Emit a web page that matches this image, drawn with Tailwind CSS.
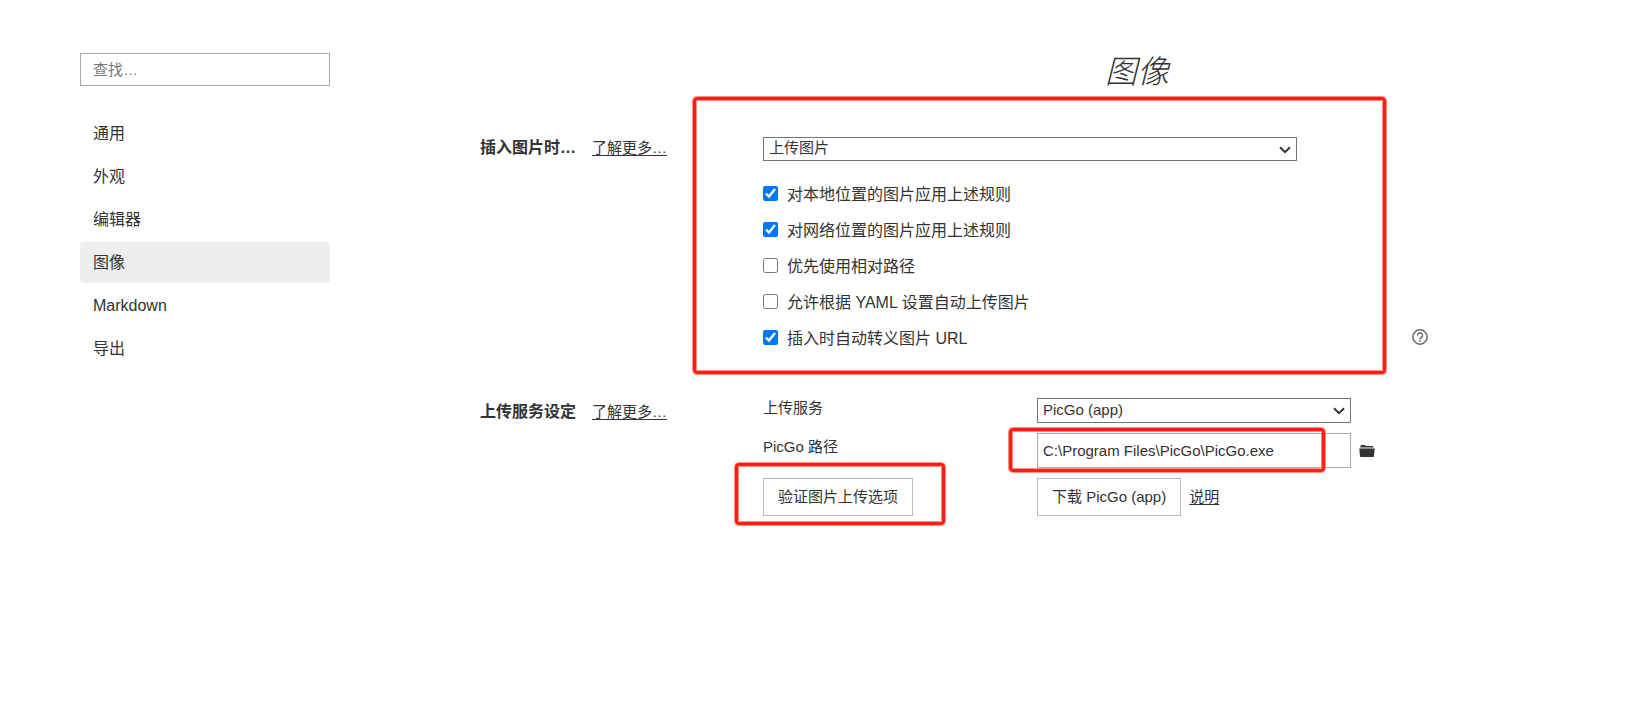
<!DOCTYPE html>
<html lang="zh-CN">
<head>
    <meta charset="UTF-8">
    <meta name="viewport" content="width=device-width, initial-scale=1.0">
    <script src="https://cdn.jsdelivr.net/npm/@tailwindcss/browser@4"></script>
    <title>偏好设置</title>
</head>
<body class="bg-white text-[#333] text-[15px] leading-6 font-['Liberation_Sans','Noto_Sans_CJK_SC',sans-serif]">
    <div class="flex min-h-screen pl-20 pr-[136px]">

        <!-- Sidebar -->
        <aside class="w-[250px] shrink-0 pt-[53px]">
            <input type="search" aria-label="查找" placeholder="查找…"
            class="block w-full h-[33px] px-3 border border-[#aaa] appearance-none placeholder:text-[#777]">
            <nav class="flex flex-col gap-0.5 mt-[27px] text-base">
                <a href="#" class="h-[41px] px-[13px] leading-[41px] rounded-sm">通用</a>
                <a href="#" class="h-[41px] px-[13px] leading-[41px] rounded-sm">外观</a>
                <a href="#" class="h-[41px] px-[13px] leading-[41px] rounded-sm">编辑器</a>
                <a href="#" class="h-[41px] px-[13px] leading-[41px] rounded-sm bg-[#eee]">图像</a>
                <a href="#" class="h-[41px] px-[13px] leading-[41px] rounded-sm">Markdown</a>
                <a href="#" class="h-[41px] px-[13px] leading-[41px] rounded-sm">导出</a>
            </nav>
        </aside>

        <main class="flex-1 min-w-0 pl-[150px] pt-[52px]">
            <h1 class="pl-[283px] text-center text-[32px] leading-10 italic font-light">图像</h1>

            <!-- Insert rules -->
            <section class="grid grid-cols-[283px_1fr] mt-[45px]">
                <div class="flex gap-4 h-[21px] items-center">
                    <h2 class="text-base font-bold">插入图片时…</h2>
                    <a href="#" class="underline underline-offset-2">了解更多…</a>
                </div>
                <div class="relative">
                    <div class="relative w-5/7">
                        <select aria-label="插入图片时" class="block w-full h-6 pl-[5px] pb-0.5 border border-[#767676] bg-white appearance-none leading-5">
                            <option>上传图片</option>
                        </select>
                        <svg class="absolute right-1.5 top-[9px] w-3 h-2 pointer-events-none" viewBox="0 0 12 8" fill="none" stroke="#333" stroke-width="2"><path d="M1 1.2l5 5 5-5"/></svg>
                    </div>
                    <div class="mt-3.5 text-base">
                        <label class="flex items-center gap-[9px] h-9">
                            <input type="checkbox" checked class="size-[15px] accent-[#0075ff]">
                            <span class="pt-1">对本地位置的图片应用上述规则</span>
                        </label>
                        <label class="flex items-center gap-[9px] h-9">
                            <input type="checkbox" checked class="size-[15px] accent-[#0075ff]">
                            <span class="pt-1">对网络位置的图片应用上述规则</span>
                        </label>
                        <label class="flex items-center gap-[9px] h-9">
                            <input type="checkbox" class="size-[15px] accent-[#0075ff]">
                            <span class="pt-1">优先使用相对路径</span>
                        </label>
                        <label class="flex items-center gap-[9px] h-9">
                            <input type="checkbox" class="size-[15px] accent-[#0075ff]">
                            <span class="pt-1">允许根据 YAML 设置自动上传图片</span>
                        </label>
                        <div class="flex items-center justify-between h-9 pr-[83px]">
                            <label class="flex items-center gap-[9px]">
                                <input type="checkbox" checked class="size-[15px] accent-[#0075ff]">
                                <span class="pt-1">插入时自动转义图片 URL</span>
                            </label>
                            <button type="button" aria-label="帮助">
                                <svg class="size-4" viewBox="0 0 16 16" fill="none" stroke="#666" stroke-width="1.5">
                                    <circle cx="8" cy="8" r="7.2"/>
                                    <path d="M5.5 6.4a2.5 2.5 0 1 1 4.1 1.9C8.6 9.1 8 9.4 8 10.6"/>
                                    <path d="M8 11.3v1.6"/>
                                </svg>
                            </button>
                        </div>
                    </div>
                    <div class="absolute -left-[70px] right-[125px] -top-10 -bottom-[19px] border-3 border-[#ff1e10] rounded-sm shadow-[0_0_0_1px_#ff9088,inset_0_0_0_1px_#ff9088] pointer-events-none"></div>
                </div>
            </section>

            <!-- Upload service -->
            <section class="grid grid-cols-[283px_1fr] mt-[43px]">
                <div class="flex gap-4 h-7 items-center">
                    <h2 class="text-base font-bold">上传服务设定</h2>
                    <a href="#" class="underline underline-offset-2">了解更多…</a>
                </div>
                <div class="grid grid-cols-[274px_1fr] gap-y-2.5">
                    <label for="service" class="-mt-0.5">上传服务</label>
                    <div class="relative w-[314px]">
                        <select id="service" class="block w-full h-[25px] pl-[5px] pb-0.5 border border-[#767676] bg-white appearance-none leading-5">
                            <option>PicGo (app)</option>
                        </select>
                        <svg class="absolute right-1.5 top-[9px] w-3 h-2 pointer-events-none" viewBox="0 0 12 8" fill="none" stroke="#333" stroke-width="2"><path d="M1 1.2l5 5 5-5"/></svg>
                    </div>

                    <label for="path" class="pt-0.5">PicGo 路径</label>
                    <div class="relative flex items-center gap-2">
                        <input id="path" type="text" value="C:\Program Files\PicGo\PicGo.exe" class="w-[314px] h-[35px] px-[5px] border border-[#aaa]">
                        <button type="button" aria-label="选择文件夹">
                            <svg class="w-4 h-3" viewBox="0 0 16 12"><path fill="#333" d="M1.5 3V.8Q1.5 0 2.3 0h3.5l1.2 1h6.5q1 0 1 1v1z"/><path fill="#bbb" d="M1.5 2.2h13v1.2h-13z"/><path fill="#333" d="M.3 3.4h15.4L15 11.2q-.1.8-.9.8H1.9q-.8 0-.9-.8z"/></svg>
                        </button>
                        <div class="absolute -left-7 w-[316px] -top-[5px] -bottom-1 border-3 border-[#ff1e10] rounded-sm shadow-[0_0_0_1px_#ff9088,inset_0_0_0_1px_#ff9088] pointer-events-none"></div>
                    </div>

                    <div class="relative">
                        <button type="button" class="h-[38px] px-3.5 border border-[#bbb]">验证图片上传选项</button>
                        <div class="absolute -left-7 w-[210px] -top-[15px] -bottom-[9px] border-3 border-[#ff1e10] rounded-sm shadow-[0_0_0_1px_#ff9088,inset_0_0_0_1px_#ff9088] pointer-events-none"></div>
                    </div>
                    <div class="flex items-center gap-2">
                        <button type="button" class="h-[38px] px-3.5 border border-[#bbb]">下载 PicGo (app)</button>
                        <a href="#" class="underline underline-offset-2">说明</a>
                    </div>
                </div>
            </section>
        </main>
    </div>
</body>
</html>
